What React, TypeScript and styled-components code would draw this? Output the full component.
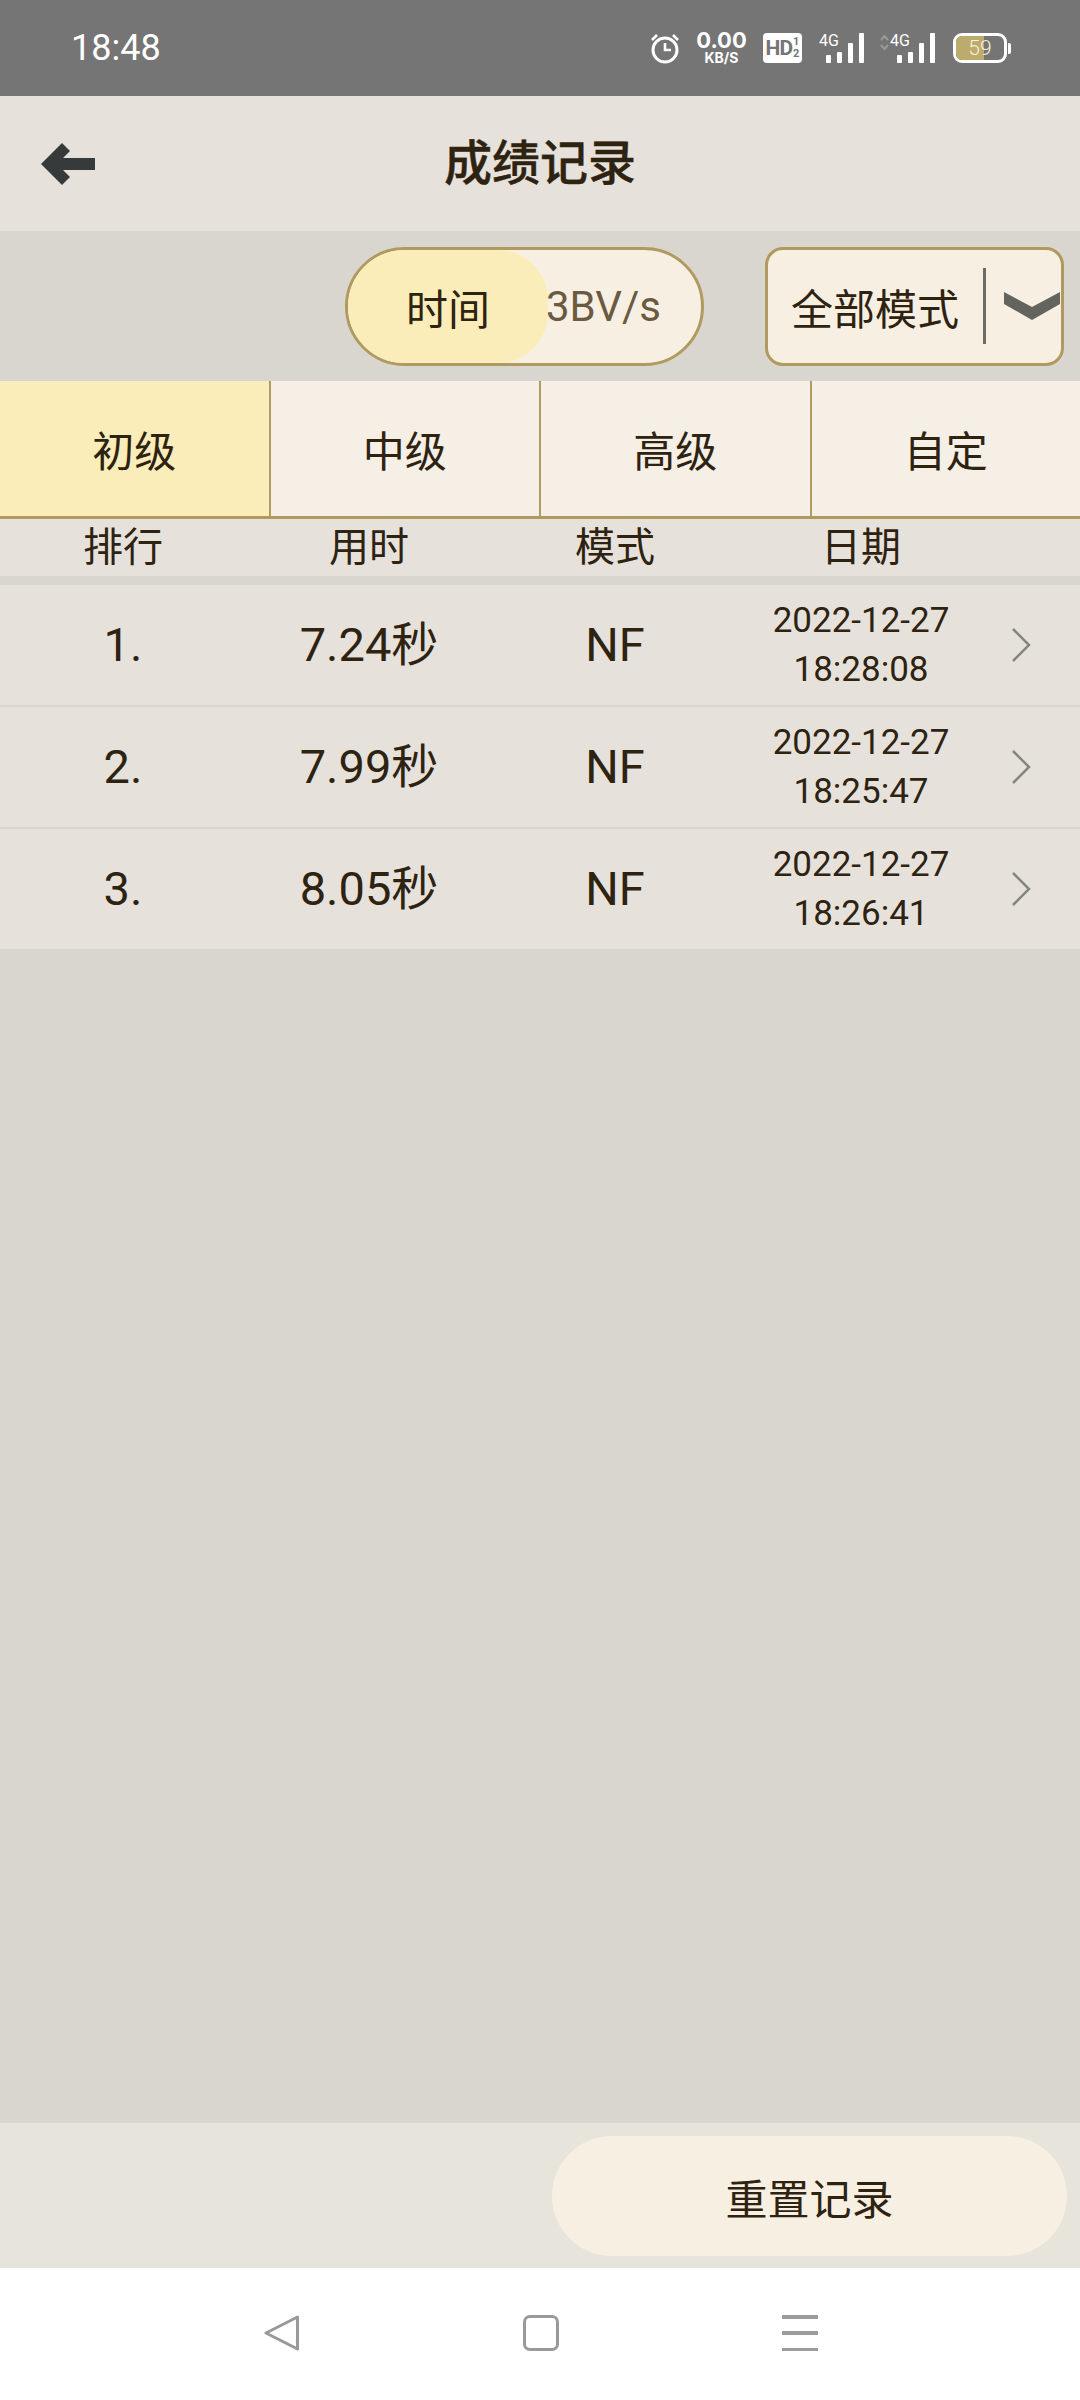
import React, { useState } from "react";
import styled, { createGlobalStyle } from "styled-components";

const GlobalStyle = createGlobalStyle`
  html, body {
    margin: 0;
    padding: 0;
    background: #d9d6cf;
  }
  * {
    box-sizing: border-box;
  }
`;

const font = `Roboto, "Noto Sans CJK SC", sans-serif`;

const records = [
  { rank: "1.", time: "7.24秒", mode: "NF", date: "2022-12-27", clock: "18:28:08" },
  { rank: "2.", time: "7.99秒", mode: "NF", date: "2022-12-27", clock: "18:25:47" },
  { rank: "3.", time: "8.05秒", mode: "NF", date: "2022-12-27", clock: "18:26:41" },
];

const levels = ["初级", "中级", "高级", "自定"];
const columns = ["排行", "用时", "模式", "日期"];

const SignalIcon: React.FC<{ roaming?: boolean }> = ({ roaming }) => (
  <SignalWrap $roaming={roaming}>
    <svg width={roaming ? 55 : 44} height="30" viewBox={roaming ? "-11 0 55 30" : "0 0 44 30"}>
      {roaming && (
        <path
          d="M-10 7l3.500-4 3.500 4M-10 12l3.500 4 3.500-4"
          fill="none"
          stroke="#9a9a9a"
          strokeWidth="2"
        />
      )}
      <rect x="6" y="22" width="5" height="8" rx="1" fill="#fff" />
      <rect x="17" y="19" width="5" height="11" rx="1" fill="#fff" />
      <rect x="28" y="10" width="5" height="20" rx="1" fill="#fff" />
      <rect x="39" y="0" width="5" height="30" rx="1" fill="#fff" />
    </svg>
    <SignalLabel $roaming={roaming}>4G</SignalLabel>
  </SignalWrap>
);

const App: React.FC = () => {
  const [level] = useState(0);

  return (
    <Page>
      <GlobalStyle />
      <StatusBar>
        <Clock>18:48</Clock>
        <StatusIcons>
          <svg width="30" height="31" viewBox="0 0 30 31" fill="none" stroke="#fff" strokeWidth="3">
            <circle cx="15" cy="17" r="12" />
            <path d="M15 10v7h6" strokeWidth="2.600" />
            <path d="M2 7l5-5M28 7l-5-5" strokeWidth="2.600" />
          </svg>
          <Speed>
            <SpeedValue>0.00</SpeedValue>
            <SpeedUnit>KB/S</SpeedUnit>
          </Speed>
          <HdBadge>
            <HdText>HD</HdText>
            <HdFraction>
              <span>1</span>
              <span>2</span>
            </HdFraction>
          </HdBadge>
          <SignalIcon />
          <SignalIcon roaming />
          <Battery>
            <BatteryBody>
              <BatteryFill style={{ width: "59%" }} />
              <BatteryText>59</BatteryText>
            </BatteryBody>
            <BatteryNub />
          </Battery>
        </StatusIcons>
      </StatusBar>

      <Header>
        <BackButton>
          <svg width="54" height="42" viewBox="0 0 54 42">
            <path
              d="M21 0l8 8-7 7h32v12H22l7 7-8 8L0 21z"
              fill="#363a3a"
            />
          </svg>
        </BackButton>
        <Title>成绩记录</Title>
      </Header>

      <Controls>
        <SortToggle>
          <SortActive>时间</SortActive>
          <SortOption>3BV/s</SortOption>
        </SortToggle>
        <ModeSelect>
          <ModeText>全部模式</ModeText>
          <ModeDivider />
          <svg width="56" height="28" viewBox="0 0 56 28">
            <path d="M0 0l28 15L56 0v12L28 28 0 12z" fill="#64645f" />
          </svg>
        </ModeSelect>
      </Controls>

      <Tabs>
        {levels.map((name, i) => (
          <Tab key={name} $active={i === level}>
            {name}
          </Tab>
        ))}
      </Tabs>

      <TableHead>
        {columns.map((name) => (
          <HeadCell key={name}>{name}</HeadCell>
        ))}
      </TableHead>

      <RecordList>
        {records.map((r) => (
          <RecordRow key={r.rank}>
            <RecordCell>{r.rank}</RecordCell>
            <RecordCell>{r.time}</RecordCell>
            <RecordCell>{r.mode}</RecordCell>
            <DateCell>
              <span>{r.date}</span>
              <span>{r.clock}</span>
            </DateCell>
            <RowArrow>
              <svg width="20" height="34" viewBox="0 0 20 34" fill="none" stroke="#85857f" strokeWidth="2.500">
                <path d="M2 1l16 16L2 33" />
              </svg>
            </RowArrow>
          </RecordRow>
        ))}
      </RecordList>

      <Footer>
        <ResetButton>重置记录</ResetButton>
      </Footer>

      <NavBar>
        <svg width="36" height="36" viewBox="0 0 36 36" fill="none" stroke="#999" strokeWidth="3" strokeLinejoin="round">
          <path d="M33.500 2L2 18l31.500 16z" transform="matrix(1 0 0 1 0 0)" />
        </svg>
        <NavSquare />
        <NavMenu>
          <NavLine />
          <NavLine />
          <NavLine />
        </NavMenu>
      </NavBar>
    </Page>
  );
};

const Page = styled.div`
  width: 1080px;
  height: 2400px;
  display: flex;
  flex-direction: column;
  background: #d9d6cf;
  font-family: ${font};
  color: #2e2211;
  overflow: hidden;
`;

const StatusBar = styled.div`
  height: 96px;
  flex: none;
  display: flex;
  align-items: center;
  justify-content: space-between;
  padding: 0 69px 0 71px;
  background: #757575;
  color: #fff;
`;

const Clock = styled.div`
  font-size: 36px;
  line-height: 42px;
`;

const StatusIcons = styled.div`
  display: flex;
  align-items: center;
  gap: 15px;
`;

const Speed = styled.div`
  width: 53px;
  display: flex;
  flex-direction: column;
  align-items: center;
  font-family: Inter, Roboto, sans-serif;
  font-weight: 700;
`;

const SpeedValue = styled.span`
  font-size: 22px;
  line-height: 19px;
`;

const SpeedUnit = styled.span`
  font-size: 14px;
  line-height: 16px;
`;

const HdBadge = styled.div`
  width: 39px;
  height: 30px;
  display: flex;
  align-items: center;
  justify-content: center;
  gap: 1px;
  background: #fff;
  border-radius: 4px;
  color: #757575;
  font-weight: 700;
`;

const HdText = styled.span`
  font-size: 21px;
  line-height: 24px;
  letter-spacing: -1px;
`;

const HdFraction = styled.span`
  display: flex;
  flex-direction: column;
  font-size: 11px;
  line-height: 12px;
`;

const SignalWrap = styled.div<{ $roaming?: boolean }>`
  position: relative;
  height: 30px;
  margin-left: ${(p) => (p.$roaming ? "1px" : "3px")};
  margin-right: ${(p) => (p.$roaming ? "3px" : "0")};

  svg {
    display: block;
  }
`;

const SignalLabel = styled.span<{ $roaming?: boolean }>`
  position: absolute;
  top: -2px;
  left: ${(p) => (p.$roaming ? "10px" : "-1px")};
  font-size: 16px;
  line-height: 19px;
  color: #fff;
`;

const Battery = styled.div`
  display: flex;
  align-items: center;
  gap: 1px;
`;

const BatteryBody = styled.div`
  position: relative;
  width: 54px;
  height: 30px;
  border: 3px solid #fff;
  border-radius: 9px;
  overflow: hidden;
`;

const BatteryFill = styled.div`
  height: 100%;
  background: #bcab6c;
`;

const BatteryText = styled.span`
  position: absolute;
  inset: 0;
  display: flex;
  align-items: center;
  justify-content: center;
  font-size: 21px;
  font-weight: 300;
  color: #f6f0d8;
`;

const BatteryNub = styled.div`
  width: 3px;
  height: 11px;
  background: #fff;
  border-radius: 0 2px 2px 0;
`;

const Header = styled.div`
  position: relative;
  height: 135px;
  flex: none;
  display: flex;
  align-items: center;
  justify-content: center;
  background: #e6e2db;
`;

const BackButton = styled.div`
  position: absolute;
  left: 41px;
  top: 47px;
  line-height: 0;
`;

const Title = styled.h1`
  margin: 0;
  font-size: 48px;
  line-height: 60px;
  font-weight: 500;
  -webkit-text-stroke: 0.4px #2e2211;
`;

const Controls = styled.div`
  height: 150px;
  flex: none;
  display: flex;
  align-items: center;
  justify-content: flex-end;
  gap: 61px;
  padding-right: 16px;
`;

const SortToggle = styled.div`
  width: 359px;
  height: 119px;
  display: flex;
  align-items: center;
  background: #f7efe2;
  border: 3px solid #b09a5f;
  border-radius: 60px;
  overflow: hidden;
`;

const SortActive = styled.div`
  width: 200px;
  height: 100%;
  flex: none;
  display: flex;
  align-items: center;
  justify-content: center;
  background: #faedb9;
  border-radius: 0 50px 50px 0;
  font-size: 42px;
`;

const SortOption = styled.div`
  margin-left: -2px;
  font-size: 42px;
  color: #6a5a42;
`;

const ModeSelect = styled.div`
  width: 299px;
  height: 119px;
  display: flex;
  align-items: center;
  padding-left: 23px;
  background: #f7efe2;
  border: 3px solid #b09a5f;
  border-radius: 18px;
`;

const ModeText = styled.span`
  font-size: 42px;
  white-space: nowrap;
`;

const ModeDivider = styled.div`
  width: 3px;
  height: 76px;
  margin: 0 18px 0 24px;
  background: #6b6b68;
`;

const Tabs = styled.div`
  height: 138px;
  flex: none;
  display: flex;
  border-bottom: 3px solid #b09a5f;
  background: #f5efe5;
`;

const Tab = styled.div<{ $active?: boolean }>`
  flex: 1;
  display: flex;
  align-items: center;
  justify-content: center;
  font-size: 42px;
  background: ${(p) => (p.$active ? "#faedb9" : "transparent")};
  border-right: 2px solid #b09a5f;

  &:last-child {
    border-right: none;
  }
`;

const TableHead = styled.div`
  height: 57px;
  flex: none;
  display: grid;
  grid-template-columns: repeat(4, 246px);
  background: #e6e2db;
`;

const HeadCell = styled.div`
  display: flex;
  align-items: center;
  justify-content: center;
  font-size: 40px;
  line-height: 46px;
`;

const RecordList = styled.div`
  flex: 1;
  margin-top: 9px;
`;

const RecordRow = styled.div`
  height: 122px;
  display: grid;
  grid-template-columns: repeat(4, 246px) 1fr;
  align-items: center;
  background: #e6e2db;
  border-bottom: 2px solid #d9d6cf;

  &:last-child {
    height: 120px;
    border-bottom: none;
  }
`;

const RecordCell = styled.div`
  text-align: center;
  font-size: 47px;
  line-height: 56px;
`;

const DateCell = styled.div`
  display: flex;
  flex-direction: column;
  align-items: center;
  font-size: 35px;
  line-height: 49px;
`;

const RowArrow = styled.div`
  display: flex;
  padding-left: 27px;
`;

const Footer = styled.div`
  height: 145px;
  flex: none;
  display: flex;
  justify-content: flex-end;
  padding: 13px 13px 12px 0;
  background: #e7e4dc;
`;

const ResetButton = styled.div`
  width: 515px;
  display: flex;
  align-items: center;
  justify-content: center;
  background: #f7efe1;
  border-radius: 60px;
  font-size: 42px;
`;

const NavBar = styled.div`
  height: 132px;
  flex: none;
  display: flex;
  align-items: center;
  padding-left: 264px;
  padding-bottom: 2px;
  gap: 223px;
  background: #fff;
`;

const NavSquare = styled.div`
  width: 36px;
  height: 36px;
  border: 3px solid #999;
  border-radius: 7px;
`;

const NavMenu = styled.div`
  width: 36px;
  height: 36px;
  margin-left: 0;
  display: flex;
  flex-direction: column;
  justify-content: space-between;
`;

const NavLine = styled.div`
  height: 3.500px;
  background: #9c9c9c;
`;

export default App;
